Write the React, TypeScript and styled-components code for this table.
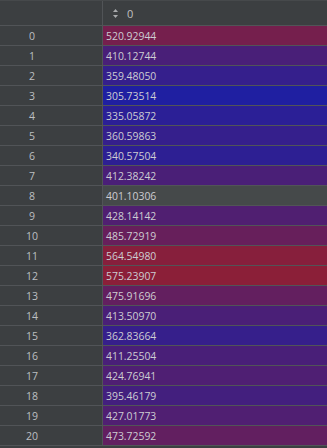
import React from 'react';
import styled, { createGlobalStyle } from 'styled-components';

const GlobalStyle = createGlobalStyle`
  html, body {
    margin: 0;
    padding: 0;
    background: #3c3f41;
  }
  body {
    font-family: "Open Sans", "Liberation Sans", sans-serif;
    color: #bbbbbb;
  }
`;

const Table = styled.div`
  width: 327px;
  height: 448px;
  overflow: hidden;
  background: #3c3f41;
  border-top: 1px solid #46494b;
  box-sizing: border-box;
`;

const Row = styled.div<{ $header?: boolean }>`
  display: grid;
  grid-template-columns: 103px 1fr;
  height: ${(p) => (p.$header ? 25 : 20)}px;
  border-bottom: 1px solid #515457;
  box-sizing: border-box;
`;

const IndexCell = styled.div`
  border-right: 1px solid #515457;
  display: flex;
  align-items: center;
  justify-content: center;
  padding-right: 38px;
  font-size: 10.5px;
  color: #bdbfc1;
`;

const ValueCell = styled.div<{ $bg: string }>`
  background: ${(p) => p.$bg};
  display: flex;
  align-items: center;
  padding-left: 3px;
  font-size: 10.4px;
  color: #cdcdd2;
`;

const HeaderCell = styled.div`
  display: flex;
  align-items: center;
  gap: 9px;
  padding-left: 10px;
  font-size: 11px;
  color: #c0c0c0;
`;

const SortIcon = () => (
  <svg width="5" height="9" viewBox="0 0 5 9">
    <path d="M2.5 0 L5 3 L0 3 Z" fill="#a9abad" />
    <path d="M0 6 L5 6 L2.5 9 Z" fill="#a9abad" />
  </svg>
);

const values = [
  520.92944, 410.12744, 359.4805, 305.73514, 335.05872, 360.59863, 340.57504,
  412.38242, 401.10306, 428.14142, 485.72919, 564.5498, 575.23907, 475.91696,
  413.5097, 362.83664, 411.25504, 424.76941, 395.46179, 427.01773, 473.72592,
];

const min = Math.min(...values);
const max = Math.max(...values);

// blue (low) to red (high)
const cellColor = (v: number) => {
  const t = (v - min) / (max - min);
  const r = Math.round(31 + t * (139 - 31));
  const g = 31;
  const b = Math.round(161 - t * (161 - 56));
  return `rgb(${r}, ${g}, ${b})`;
};

const App: React.FC = () => (
  <>
    <GlobalStyle />
    <Table>
      <Row $header>
        <IndexCell />
        <HeaderCell>
          <SortIcon />
          <span>0</span>
        </HeaderCell>
      </Row>
      {values.map((v, i) => (
        <Row key={i}>
          <IndexCell>{i}</IndexCell>
          <ValueCell $bg={i === 8 ? '#45494a' : cellColor(v)}>{v.toFixed(5)}</ValueCell>
        </Row>
      ))}
    </Table>
  </>
);

export default App;
